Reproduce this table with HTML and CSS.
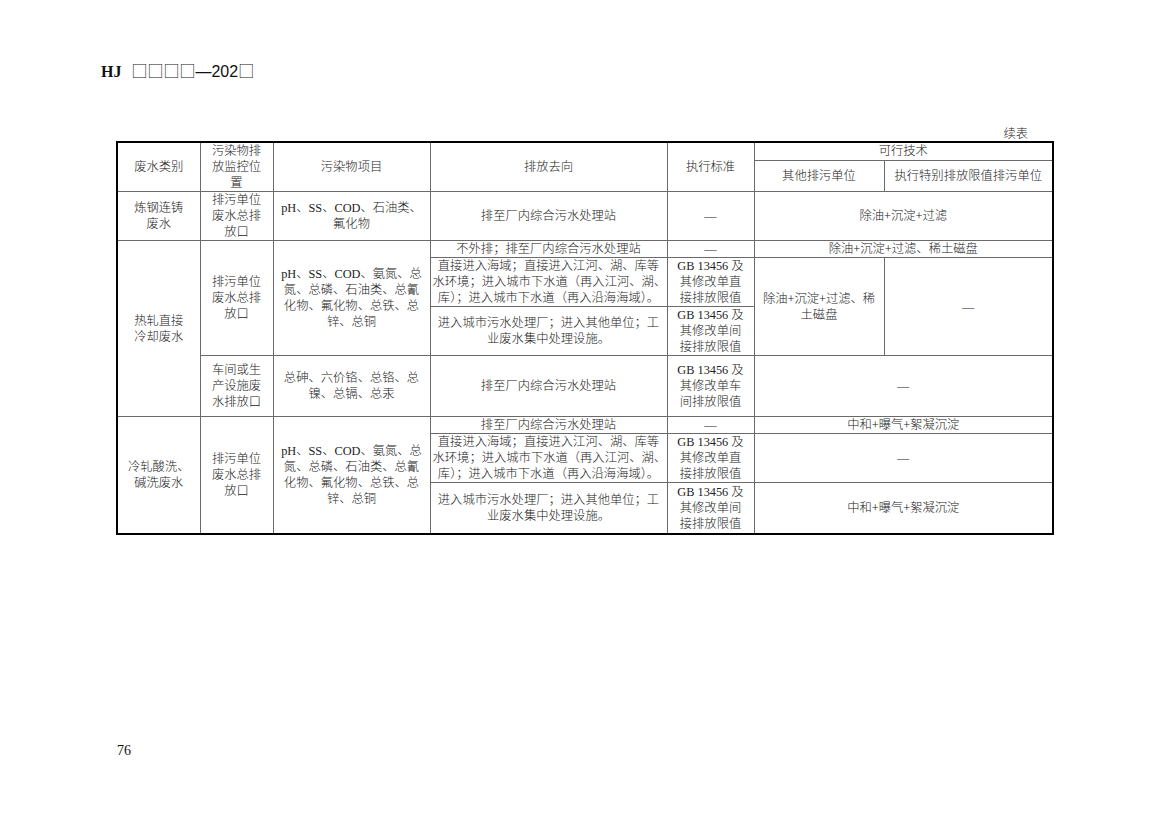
FILE: index.html
```html
<!DOCTYPE html>
<html lang="zh-CN">
<head>
<meta charset="utf-8">
<title>HJ 续表</title>
<link rel="stylesheet" href="styles.css">
</head>
<body>
<div class="page">
  <div class="doc-head"><span class="hj">HJ</span><span class="boxes">□□□□</span><span class="code">—202</span><span class="boxes">□</span></div>
  <div class="sheet">
    <div class="cont-label">续表</div>
    <table class="grid">
      <colgroup>
        <col class="c1"><col class="c2"><col class="c3"><col class="c4"><col class="c5"><col class="c6"><col class="c7">
      </colgroup>
      <thead>
        <tr class="r-ha">
          <th rowspan="2">废水类别</th>
          <th rowspan="2">污染物排<br>放监控位<br>置</th>
          <th rowspan="2">污染物项目</th>
          <th rowspan="2">排放去向</th>
          <th rowspan="2">执行标准</th>
          <th colspan="2">可行技术</th>
        </tr>
        <tr class="r-hb">
          <th>其他排污单位</th>
          <th>执行特别排放限值排污单位</th>
        </tr>
      </thead>
      <tbody>
        <tr class="r-49">
          <td>炼钢连铸<br>废水</td>
          <td>排污单位<br>废水总排<br>放口</td>
          <td>pH、SS、COD、石油类、<br>氟化物</td>
          <td>排至厂内综合污水处理站</td>
          <td>—</td>
          <td colspan="2">除油+沉淀+过滤</td>
        </tr>
        <tr class="r-17">
          <td rowspan="4">热轧直接<br>冷却废水</td>
          <td rowspan="3">排污单位<br>废水总排<br>放口</td>
          <td rowspan="3">pH、SS、COD、氨氮、总<br>氮、总磷、石油类、总氰<br>化物、氟化物、总铁、总<br>锌、总铜</td>
          <td>不外排；排至厂内综合污水处理站</td>
          <td>—</td>
          <td colspan="2">除油+沉淀+过滤、稀土磁盘</td>
        </tr>
        <tr class="r-49">
          <td>直接进入海域；直接进入江河、湖、库等<br>水环境；进入城市下水道（再入江河、湖、<br>库）；进入城市下水道（再入沿海海域）。</td>
          <td>GB 13456 及<br>其修改单直<br>接排放限值</td>
          <td rowspan="2">除油+沉淀+过滤、稀<br>土磁盘</td>
          <td rowspan="2">—</td>
        </tr>
        <tr class="r-49">
          <td>进入城市污水处理厂；进入其他单位；工<br>业废水集中处理设施。</td>
          <td>GB 13456 及<br>其修改单间<br>接排放限值</td>
        </tr>
        <tr class="r-61">
          <td>车间或生<br>产设施废<br>水排放口</td>
          <td>总砷、六价铬、总铬、总<br>镍、总镉、总汞</td>
          <td>排至厂内综合污水处理站</td>
          <td>GB 13456 及<br>其修改单车<br>间排放限值</td>
          <td colspan="2">—</td>
        </tr>
        <tr class="r-17">
          <td rowspan="3">冷轧酸洗、<br>碱洗废水</td>
          <td rowspan="3">排污单位<br>废水总排<br>放口</td>
          <td rowspan="3">pH、SS、COD、氨氮、总<br>氮、总磷、石油类、总氰<br>化物、氟化物、总铁、总<br>锌、总铜</td>
          <td>排至厂内综合污水处理站</td>
          <td>—</td>
          <td colspan="2">中和+曝气+絮凝沉淀</td>
        </tr>
        <tr class="r-49">
          <td>直接进入海域；直接进入江河、湖、库等<br>水环境；进入城市下水道（再入江河、湖、<br>库）；进入城市下水道（再入沿海海域）。</td>
          <td>GB 13456 及<br>其修改单直<br>接排放限值</td>
          <td colspan="2">—</td>
        </tr>
        <tr class="r-51">
          <td>进入城市污水处理厂；进入其他单位；工<br>业废水集中处理设施。</td>
          <td>GB 13456 及<br>其修改单间<br>接排放限值</td>
          <td colspan="2">中和+曝气+絮凝沉淀</td>
        </tr>
      </tbody>
    </table>
  </div>
  <div class="page-no">76</div>
</div>
</body>
</html>
```

FILE: styles.css
```css
html, body {
  margin: 0;
  padding: 0;
  background: #fff;
}

body {
  font-family: "Liberation Serif", "Noto Sans CJK SC", serif;
  color: #222;
}

.page {
  width: 1169px;
  height: 826px;
  padding-top: 60px;
  box-sizing: border-box;
  overflow: hidden;
}

.doc-head {
  margin-left: 101px;
  height: 20px;
  line-height: 20px;
  font-size: 16px;
  color: #111;
  white-space: nowrap;
}

.hj {
  font-family: "Liberation Serif", serif;
  font-weight: bold;
  margin-right: 10px;
}

.boxes {
  font-family: "Noto Sans CJK SC", sans-serif;
  font-weight: 300;
}

.code {
  font-family: "Liberation Sans", sans-serif;
}

.sheet {
  margin-left: 116px;
  width: 936px;
}

.cont-label {
  margin-top: 45px;
  height: 16px;
  line-height: 16px;
  font-size: 12.3px;
  text-align: right;
  padding-right: 24px;
  font-family: "Noto Sans CJK SC", sans-serif;
  font-weight: 300;
}

.grid {
  width: 936px;
  table-layout: fixed;
  border-collapse: collapse;
  border: 2px solid #000;
  font-size: 12.3px;
  line-height: 16px;
}

.grid th,
.grid td {
  border: 1px solid #6a6a6a;
  padding: 0 2px;
  text-align: center;
  vertical-align: middle;
  font-weight: 300;
  white-space: nowrap;
  overflow: visible;
}

.c1 { width: 83px; }
.c2 { width: 73px; }
.c3 { width: 157px; }
.c4 { width: 237px; }
.c5 { width: 87px; }
.c6 { width: 130px; }
.c7 { width: 169px; }

.r-ha { height: 18px; }
.r-hb { height: 31px; }
.r-17 { height: 17px; }
.r-49 { height: 49px; }
.r-51 { height: 51px; }
.r-61 { height: 61px; }

.page-no {
  margin-left: 117px;
  margin-top: 208px;
  font-size: 14px;
  line-height: 16px;
  color: #111;
}
```
